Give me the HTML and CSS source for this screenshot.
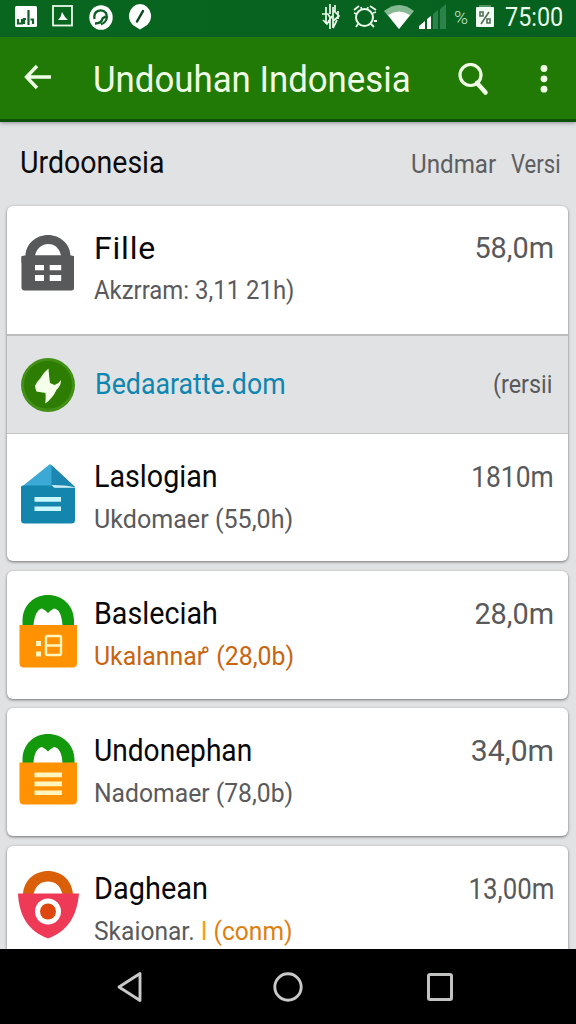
FILE: index.html
```html
<!DOCTYPE html>
<html lang="id">
<head>
<meta charset="utf-8">
<title>Undouhan Indonesia</title>
<link rel="stylesheet" href="styles.css">
</head>
<body>
<div class="screen">
  <div class="status">
    <svg class="s-app" width="22" height="22" viewBox="0 0 22 22"><rect width="22" height="21" rx="1.500" fill="#fff"/><path d="M3 13v4.500h4V13M9 18v-5h2M13.500 4v15M15.500 13.500h2.500v4.500" fill="none" stroke="#14602a" stroke-width="2.200"/></svg>
    <svg class="s-pic" width="22" height="22" viewBox="0 0 22 22"><rect x="1" y="1" width="19" height="19.500" fill="none" stroke="#e9f8e9" stroke-width="1.800"/><path d="M6 15l2.500-3L10 7l3 5 3 3z" fill="#fff"/></svg>
    <svg class="s-sync" width="24" height="26" viewBox="0 0 24 26"><ellipse cx="12" cy="12.500" rx="11.700" ry="12.300" fill="#fff"/><path d="M5.500 14C4 5 13 3.500 17 8q3 8-5 11.500M6 18.500c4 0 7-1.500 7.500-5l3-2" fill="none" stroke="#0a6022" stroke-width="2.300"/></svg>
    <svg class="s-pen" width="24" height="26" viewBox="0 0 24 26"><path d="M12 0a11.700 12 0 0 1 4 23l-4 2.500L8 23A11.700 12 0 0 1 12 0z" fill="#fff"/><path d="M15 7l-6 10.500" stroke="#0a4820" stroke-width="2.500" stroke-linecap="round"/></svg>
    <span class="spacer"></span>
    <svg class="s-vib" width="20" height="28" viewBox="0 0 20 28"><path d="M5 4v17M9 1v10M9 14v12M1 11h6l3 5M2 17l4 4 5-8M12 4v21M12 7l6 6-6 5M17 8v8M16 17l-4 8M14 2v8" fill="none" stroke="#eafcec" stroke-width="1.700"/></svg>
    <svg class="s-alarm" width="24" height="26" viewBox="0 0 24 26"><circle cx="11.500" cy="13.500" r="8.500" fill="none" stroke="#eafcec" stroke-width="2"/><path d="M1 6l5-4M17 2l6 4M5 20l-2 3M18 20l3 3M1 9l3 1M20 9l3-1M21 17h3M8 3l1 3M15 3l-1 3" stroke="#eafcec" stroke-width="1.800"/></svg>
    <svg class="s-wifi" width="30" height="24" viewBox="0 0 30 24"><path d="M0 6Q15-6 30 6L15 24z" fill="#84b991"/><path d="M4 10q11-7 22 0L15 24z" fill="#fff"/></svg>
    <svg class="s-signal" width="27" height="25" viewBox="0 0 27 25"><path d="M0 25v-3l6-5v8zM8 25V15l4-3v13z" fill="#fff"/><path d="M14 25V10l5-4v19zM21 25V5l6-5v25z" fill="#2b824a"/></svg>
    <span class="pct">%</span>
    <svg class="s-batt" width="18" height="23" viewBox="0 0 18 23"><path d="M3 0h12v3H3z" fill="#549363"/><rect y="2" width="18" height="20" rx="1" fill="#f2fff4"/><path d="M13 7L5 19M4 7h3v4H4zM11 14h3v4h-3z" fill="none" stroke="#536d58" stroke-width="1.600"/></svg>
    <span class="time fit">75:00</span>
  </div>

  <header class="appbar">
    <svg class="back" width="28" height="26" viewBox="0 0 28 26"><path d="M13 2L2.500 13 13 24M2.500 13H27" fill="none" stroke="#f0ffe5" stroke-width="3.400"/></svg>
    <h1 class="title fit">Undouhan Indonesia</h1>
    <svg class="search" width="32" height="34" viewBox="0 0 32 34"><circle cx="12.500" cy="12" r="10.500" fill="none" stroke="#f0ffe5" stroke-width="3.200"/><path d="M19 20l8.500 9.500" stroke="#f0ffe5" stroke-width="4.600" stroke-linecap="round"/></svg>
    <svg class="more" width="8" height="30" viewBox="0 0 8 30"><g fill="#f0ffe5"><circle cx="4" cy="4.500" r="3.400"/><circle cx="4" cy="14.800" r="3.400"/><circle cx="4" cy="25.200" r="3.400"/></g></svg>
  </header>

  <main class="content">
    <div class="section">
      <h2 class="heading fit">Urdoonesia</h2>
      <span class="column undmar fit">Undmar</span>
      <span class="column versi fit">Versi</span>
    </div>

    <section class="card">
      <div class="row first">
        <svg class="icon" width="64" height="84" viewBox="0 0 64 84"><path d="M9.500 28C9.500 16 20 7 32 7s22.500 9 22.500 21H58V60a2.500 2.500 0 0 1-2.500 2.500h-47A3 3 0 0 1 5.500 59V28zM19 27.500h26C43 19 38 16 32 16s-11 4-13 11.500z" fill="#58595b" fill-rule="evenodd"/><path d="M5.500 30q0-2.500 3-2.500h47q2.500 0 2.500 2.500v5h-52.500z" fill="#58595b"/><path d="M19 37h9v5.300h-9zM33.700 37h11.500v5.300H33.700zM19 47h9v6h-9zM33.700 47h11.500v6H33.700z" fill="#fff"/></svg>
        <div class="text"><div class="name fille">Fille</div><div class="sub fit akz">Akzrram: 3,11 21h)</div></div>
        <div class="value fit">58,0m</div>
      </div>
      <div class="row selected">
        <svg class="badge" width="54" height="54" viewBox="0 0 54 54"><circle cx="27" cy="27" r="27" fill="#439016"/><circle cx="27" cy="26.800" r="24" fill="#2d7d02"/><path d="M27.500 10.500Q23 14 19.500 20q-4 4-5.500 8 .500 4 1.500 5.500l9 1.500q.500 5-.200 10.500Q32 40 35.700 31.500 40 28 40 22q-2 3.500-6.500 5l-4.500-2q-1-6-1.500-14.500z" fill="#f5ffe9"/></svg>
        <div class="name fit link">Bedaaratte.dom</div>
        <div class="value fit rersii">(rersii</div>
      </div>
      <div class="row third">
        <svg class="icon" width="64" height="84" viewBox="0 0 64 84"><path d="M5.500 31L34 8l25 23z" fill="#3aa9d4"/><path d="M35.500 9v21L59 31z" fill="#1a86b1"/><path d="M5 31q0-1.500 2-1.500h29l3 2h20V64q0 3.500-3.500 3.500h-47Q5 67.500 5 64z" fill="#1485ad"/><path d="M35.500 29l13 .500q5 .500 11 2H38z" fill="#c9edf7"/><path d="M18.500 41H45v4.800H18.500zM18.500 50.500H45V55H18.500z" fill="#c8f7ff"/></svg>
        <div class="text"><div class="name fit">Laslogian</div><div class="sub fit">Ukdomaer (55,0h)</div></div>
        <div class="value fit v1810">1810m</div>
      </div>
    </section>

    <section class="card">
      <div class="row">
        <svg class="icon" width="64" height="84" viewBox="0 0 64 84"><path d="M6.500 33V27C7 12 18 2 32 2s25.500 10 26 25v6H46.500C46 22 43 16 38 15.500q-3.500 1.500-6 4.500-2.500-3-6-4.500C21 16 18 24 17.500 33z" fill="#12990c"/><path d="M3.500 32H61v38q0 4.500-4.500 4.500H8Q3.500 74.500 3.500 70z" fill="#ff9203"/><path d="M20 48h5v5h-5zM20 58.500h5v5h-5z" fill="#fff5bd"/><path d="M31.500 43h12q1.500 0 1.500 1.500v16q0 1.500-1.500 1.500h-12q-1.500 0-1.500-1.500v-16q0-1.500 1.500-1.500zM30 52.500h15" fill="none" stroke="#fff5bd" stroke-width="2.400"/></svg>
        <div class="text"><div class="name fit">Basleciah</div><div class="sub fit rust">Ukalanna<span class="tight">r</span>° (28,0b)</div></div>
        <div class="value fit">28,0m</div>
      </div>
    </section>

    <section class="card">
      <div class="row">
        <svg class="icon" width="64" height="84" viewBox="0 0 64 84"><path d="M6.500 33V29C7 14 18 4 32 4s26 10 26.500 25v4H46.500C46 23 43 17.500 38 17q-3.500 1.500-6 4.500-2.500-3-6-4.500c-5 .5-8 7-8.500 16z" fill="#12990c"/><path d="M3.500 32.500H61V70q0 4.500-4.500 4.500H8Q3.500 74.500 3.500 70z" fill="#ff9203"/><path d="M18.500 42.500H46v4.800H18.500zM18.500 51.500H46v4.800H18.500zM18.500 60.500H46v4.500H18.500z" fill="#fff5bd"/></svg>
        <div class="text"><div class="name fit undo">Undonephan</div><div class="sub fit nado">Nadomaer (78,0b)</div></div>
        <div class="value fit v34">34,0m</div>
      </div>
    </section>

    <section class="card">
      <div class="row">
        <svg class="icon" width="64" height="84" viewBox="0 0 64 84"><path d="M7 26C8 12 19 3 32 3s24 9 25 23H46.500C44 17 39 13.500 32 13.500S20 17 17.500 26z" fill="#d95f08"/><path d="M2 25.500h61c-2 22-11 37.500-31 45C12 63 3 47.500 2 25.500z" fill="#ee3a57"/><circle cx="32" cy="43.500" r="13" fill="#fff"/><circle cx="32" cy="43.500" r="8" fill="#df4710"/></svg>
        <div class="text"><div class="name fit dagh">Daghean</div><div class="sub fit skai">Skaionar. <span class="amber"><b>I</b> (conm)</span></div></div>
        <div class="value fit v13">13,00m</div>
      </div>
    </section>
  </main>

  <nav class="navbar">
    <svg width="26" height="32" viewBox="0 0 26 32"><path d="M2 16L23 2.500v27z" fill="none" stroke="#c9c9c9" stroke-width="2.900" stroke-linejoin="round"/></svg>
    <svg width="30" height="32" viewBox="0 0 30 32"><circle cx="15" cy="16" r="13.200" fill="none" stroke="#c9c9c9" stroke-width="2.900"/></svg>
    <svg width="26" height="32" viewBox="0 0 26 32"><rect x="1.500" y="3.500" width="23" height="25" rx="1.500" fill="none" stroke="#c1c3c1" stroke-width="3"/></svg>
  </nav>
</div>
</body>
</html>
```
FILE: styles.css
```css
* { box-sizing: border-box; }
body { margin: 0; font-family: Roboto, "Liberation Sans", sans-serif; }
svg { display: block; flex: none; }
h1, h2 { margin: 0; font-weight: 400; }

.screen {
  width: 576px;
  height: 1024px;
  display: flex;
  flex-direction: column;
  overflow: hidden;
  background: #e1e2e3;
}

/* Slightly condensed text, tuned through --fit */
.fit {
  white-space: nowrap;
  transform: scaleX(var(--fit, 0.965));
  transform-origin: left center;
}

.status {
  flex: none;
  height: 37px;
  display: flex;
  align-items: flex-start;
  padding: 0 0 0 15px;
  background: linear-gradient(90deg, #08661f, #06611f);
  color: #eafcec;
}
.spacer { flex: 1; }
.s-app { margin-top: 6px; }
.s-pic { margin: 5px 0 0 15px; }
.s-sync { margin: 5px 0 0 15px; }
.s-pen { margin: 4px 0 0 15px; }
.s-vib { margin: 3px 12px 0 0; }
.s-alarm { margin: 4px 7px 0 0; }
.s-wifi { margin: 5px 5px 0 0; }
.s-signal { margin: 4px 8px 0 0; }
.pct { width: 14px; margin: 6px 8px 0 0; font-size: 19px; line-height: 24px; font-weight: 300; letter-spacing: -1px; color: #c4e6c9; }
.s-batt { margin: 5px 11px 0 0; }
.time { --fit: 0.935; width: 71px; font-size: 25px; line-height: 36px; }

.appbar {
  flex: none;
  height: 85px;
  display: flex;
  align-items: flex-start;
  padding-left: 24px;
  background: #217a05;
  border-bottom: 3px solid #0a5103;
  box-shadow: 0 1px 4px rgba(60, 60, 80, 0.5);
  color: #f0ffe5;
}
.back { margin-top: 27px; }
.title { --fit: 0.967; width: 363px; margin: 21px 0 0 41px; font-size: 36px; line-height: 44px; }
.search { margin: 26px 0 0 2px; }
.more { margin: 27px 0 0 50px; }

.content { flex: 1; min-height: 0; overflow: hidden; padding: 0 8px 0 7px; }

.section { height: 84px; display: flex; align-items: flex-start; padding: 23px 0 0 13px; }
.heading { --fit: 0.92; flex: 1; font-size: 31px; line-height: 36px; color: #0b0b0c; }
.column { flex: none; margin-top: 1px; font-size: 26px; line-height: 36px; color: #5d5e62; }
.undmar { --fit: 0.93; width: 100px; }
.versi { --fit: 0.85; width: 57px; }

.card {
  margin-bottom: 9.5px;
  background: #fff;
  border-radius: 6px;
  box-shadow: 0 1px 3px rgba(0, 0, 0, 0.5);
}
.row { height: 128px; display: flex; align-items: flex-start; padding: 25px 14px 0 9px; }
.icon { margin: -3px 14px 0 0; }
.text { flex: 1; min-width: 0; }
.name { --fit: 0.925; font-size: 31px; line-height: 36px; color: #080808; }
.sub { --fit: 0.965; margin-top: 8px; font-size: 26px; line-height: 32px; color: #5a5a5c; }
.value { --fit: 0.995; font-size: 29px; line-height: 36px; color: #58595b; transform-origin: right center; }

.first { padding-top: 24px; }
.first .icon { margin-top: -2px; }
.fille { font-size: 32px; letter-spacing: 0.8px; }
.akz { --fit: 0.92; }

.selected {
  height: 100px;
  padding: 22px 16px 0 14px;
  background: #e1e2e4;
  border-top: 2px solid #bcbcbe;
  border-bottom: 1px solid #c3c4c6;
}
.badge { margin-right: 20px; }
.selected .name { --fit: 0.922; flex: 1; margin-top: 8px; font-size: 29px; line-height: 36px; color: #0f86b0; }
.selected .rersii { --fit: 0.88; margin-top: 8px; font-size: 26.5px; }

.third { height: 127px; }
.v1810 { --fit: 0.91; }
.v34 { --fit: 1.04; }
.v13 { --fit: 0.89; }
.undo { --fit: 0.907; }
.dagh { --fit: 0.933; }
.nado { --fit: 0.95; }
.skai { --fit: 0.945; }
.rust { --fit: 0.955; color: #c9640f; }
.tight { letter-spacing: -4.5px; }
.amber { color: #dc8010; }
.amber b { font-weight: 400; color: #ff9b10; }

.navbar {
  flex: none;
  height: 75px;
  display: flex;
  padding: 22px 0 0 117px;
  gap: 127px;
  background: #000;
}
.navbar svg:first-child { margin-right: 3px; }
.navbar svg:last-child { margin-left: -3px; }
```
